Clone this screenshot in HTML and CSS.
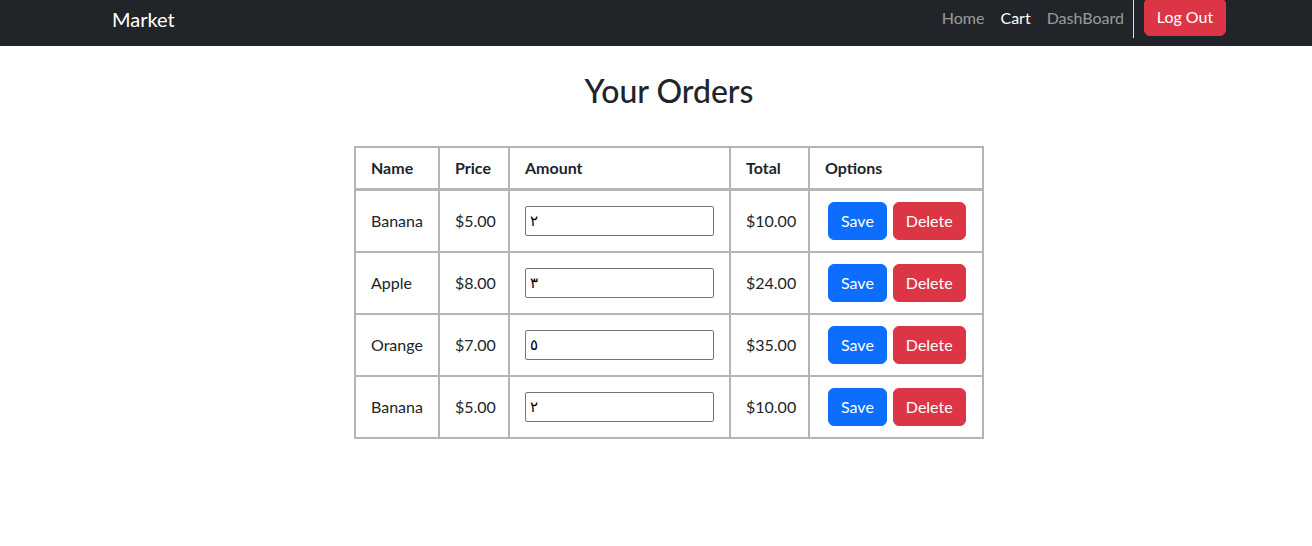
FILE: index.html
```html
<!DOCTYPE html>
<html lang="en">
<head>
<meta charset="utf-8">
<title>Market - Your Orders</title>
<link rel="stylesheet" href="styles.css">
</head>
<body>
<nav class="navbar">
  <div class="container nav-inner">
    <a class="brand" href="#">Market</a>
    <div class="nav-right">
      <a class="nav-link" href="#">Home</a>
      <a class="nav-link active" href="#">Cart</a>
      <a class="nav-link" href="#">DashBoard</a>
      <span class="divider"></span>
      <button class="btn btn-danger logout">Log Out</button>
    </div>
  </div>
</nav>
<main class="container main">
  <h2 class="title">Your Orders</h2>
  <table class="orders">
    <colgroup>
      <col class="c-name"><col class="c-price"><col class="c-amount"><col class="c-total"><col class="c-options">
    </colgroup>
    <thead>
      <tr><th>Name</th><th>Price</th><th>Amount</th><th>Total</th><th>Options</th></tr>
    </thead>
    <tbody>
      <tr><td>Banana</td><td>$5.00</td><td><input class="amount" type="text" value="٢"></td><td>$10.00</td><td><div class="opts"><button class="btn btn-primary">Save</button><button class="btn btn-danger">Delete</button></div></td></tr>
      <tr><td>Apple</td><td>$8.00</td><td><input class="amount" type="text" value="٣"></td><td>$24.00</td><td><div class="opts"><button class="btn btn-primary">Save</button><button class="btn btn-danger">Delete</button></div></td></tr>
      <tr><td>Orange</td><td>$7.00</td><td><input class="amount" type="text" value="٥"></td><td>$35.00</td><td><div class="opts"><button class="btn btn-primary">Save</button><button class="btn btn-danger">Delete</button></div></td></tr>
      <tr><td>Banana</td><td>$5.00</td><td><input class="amount" type="text" value="٢"></td><td>$10.00</td><td><div class="opts"><button class="btn btn-primary">Save</button><button class="btn btn-danger">Delete</button></div></td></tr>
    </tbody>
  </table>
</main>
</body>
</html>
```
FILE: styles.css
```css
* { box-sizing: border-box; }
body {
  margin: 0;
  font-family: Lato, "Noto Sans", "Liberation Sans", sans-serif;
  font-size: 16px;
  line-height: 1.5;
  color: #212529;
  background: #fff;
}
.container {
  width: 1140px;
  margin: 0 auto;
  padding: 0 0 0 26px;
}
.navbar {
  background: #212529;
  height: 46px;
}
.nav-inner {
  display: flex;
  align-items: flex-start;
  justify-content: space-between;
  height: 46px;
}
.brand {
  color: #fff;
  text-decoration: none;
  font-size: 20px;
  line-height: 30px;
  padding-top: 4px;
}
.nav-right {
  display: flex;
  align-items: flex-start;
  padding-left: 2px;
}
.nav-link {
  color: rgba(255, 255, 255, 0.55);
  text-decoration: none;
  padding: 6px 8px 8px;
  line-height: 24px;
  font-size: 16px;
}
.nav-link.active { color: #fff; }
.divider {
  width: 1px;
  height: 38px;
  background: #dee2e6;
  margin: 0 10px 0 1px;
}
.btn {
  font-family: inherit;
  font-size: 16px;
  line-height: 24px;
  padding: 6px 12px;
  border: 1px solid transparent;
  border-radius: 6px;
  color: #fff;
  cursor: pointer;
}
.btn-primary { background: #0d6efd; border-color: #0d6efd; }
.btn-danger { background: #dc3545; border-color: #dc3545; }
.logout {
  margin-top: -2px;
  width: 82px;
  padding: 6px 0;
}
.main { text-align: center; }
.title {
  font-size: 32px;
  font-weight: 500;
  line-height: 1.2;
  margin: 26px 0 36px;
}
.orders {
  margin: 0 auto;
  width: 630px;
  table-layout: fixed;
  border-collapse: collapse;
  text-align: left;
  border: 2px solid #b5b5b5;
}
.c-name { width: 84px; }
.c-price { width: 70px; }
.c-amount { width: 221px; }
.c-total { width: 79px; }
.c-options { width: 174px; }
.orders th, .orders td {
  border: 2px solid #b5b5b5;
  padding: 11px 15px;
  vertical-align: middle;
  white-space: nowrap;
}
.orders th {
  font-weight: 700;
  padding-top: 8px;
  padding-bottom: 8px;
  border-bottom-width: 3px;
}
.amount {
  width: 189px;
  height: 30px;
  border: 1px solid #767676;
  border-radius: 2px;
  font-family: "DejaVu Sans", "Noto Sans", sans-serif;
  font-size: 15px;
  padding: 0 4px;
  color: #000;
  display: block;
}
.opts {
  display: flex;
  gap: 6px;
  padding-left: 3px;
}
```
